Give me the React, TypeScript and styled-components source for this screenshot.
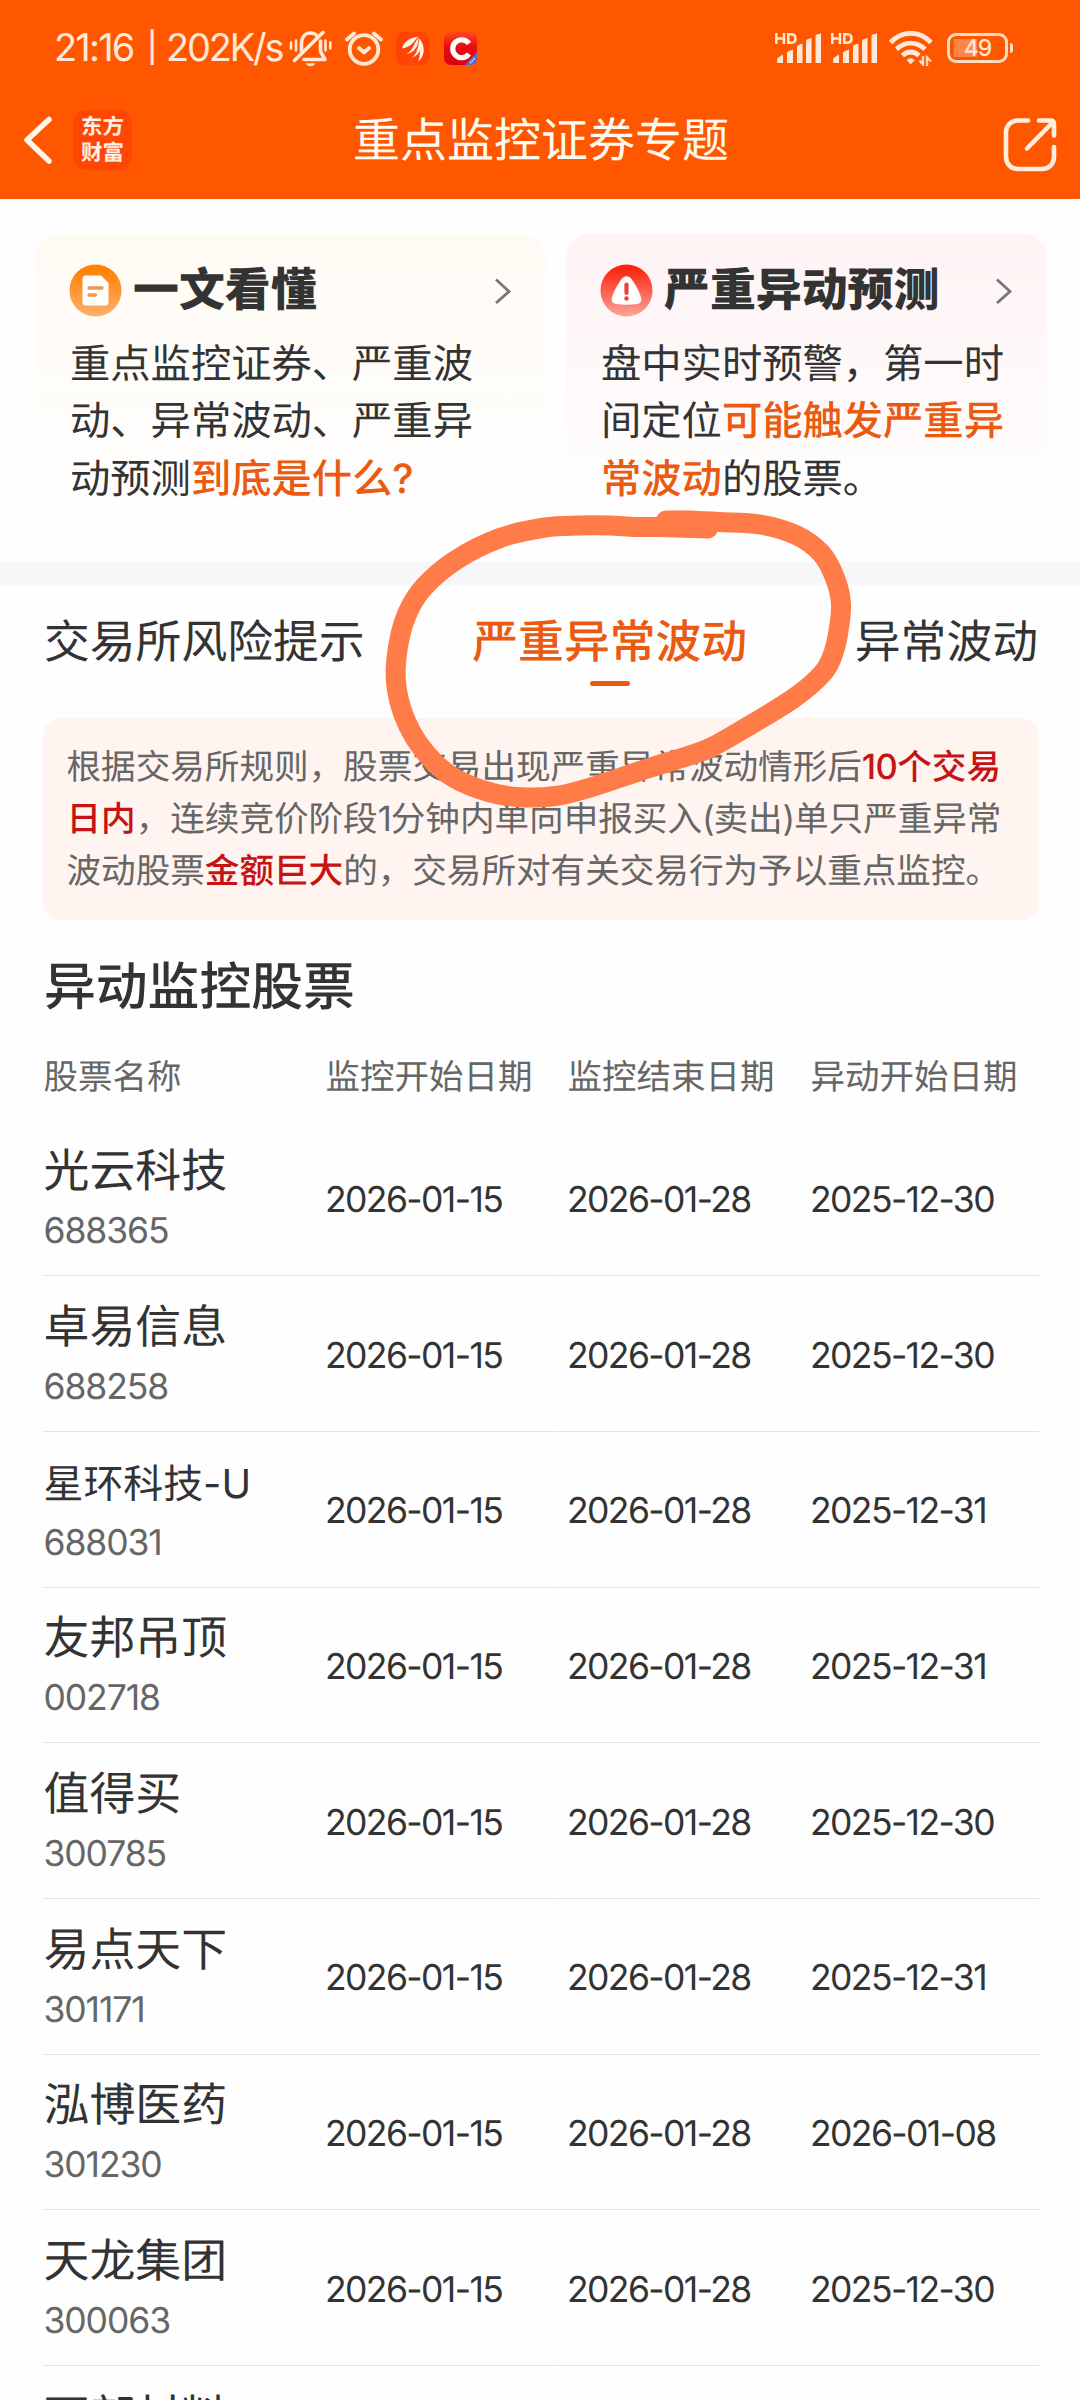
import React from 'react';
import styled, { createGlobalStyle } from 'styled-components';

const GlobalStyle = createGlobalStyle`
  *, *::before, *::after { box-sizing: border-box; }
  html, body { margin: 0; padding: 0; background: #fff; }
  body {
    width: 1080px;
    height: 2400px;
    overflow: hidden;
    color: #333;
    font-family: Inter, "Noto Sans CJK SC", sans-serif;
    text-rendering: geometricPrecision;
  }
`;

const Screen = styled.main`
  position: relative;
  display: flex;
  flex-direction: column;
  width: 1080px;
  height: 2400px;
  overflow: hidden;
  background: #fefefe;
`;

const TopBar = styled.header`
  display: flex;
  flex-direction: column;
  height: 199px;
  flex: none;
  background: #ff5600;
`;

const StatusBar = styled.div`
  display: flex;
  align-items: center;
  justify-content: space-between;
  height: 80px;
  padding: 16px 67px 0 54px;
  color: #ffe9d6;
`;

const StatusGroup = styled.div`
  display: flex;
  align-items: center;
  height: 64px;
`;

const StatusText = styled.span<{ $width: number; $spacing: number }>`
  width: ${(p) => p.$width}px;
  font-size: 38px;
  line-height: 60px;
  letter-spacing: ${(p) => p.$spacing}px;
  white-space: nowrap;
`;

const StatusDivider = styled.span`
  width: 21px;
  padding-left: 2px;
  font-size: 30px;
  font-weight: 500;
  line-height: 60px;
`;

const IconSlot = styled.span<{ $left: number }>`
  display: flex;
  margin-left: ${(p) => p.$left}px;
`;

const NavBar = styled.div`
  display: grid;
  grid-template-columns: 200px 1fr 200px;
  align-items: center;
  height: 119px;
`;

const NavLeft = styled.div`
  display: flex;
  align-items: center;
  gap: 20px;
  padding-left: 22px;
`;

const NavRight = styled.div`
  display: flex;
  justify-content: flex-end;
  padding: 10px 23px 0 0;
`;

const Brand = styled.div`
  width: 59px;
  height: 60px;
  padding-top: 3px;
  border-radius: 13px;
  background: #ff4703;
  color: #fff0e8;
  text-align: center;
  font: 700 21.5px/26px "Noto Sans CJK SC", sans-serif;
`;

const NavTitle = styled.h1`
  margin: 0;
  padding: 2px 0 0 2px;
  text-align: center;
  font-size: 47px;
  font-weight: 400;
  line-height: 70px;
  color: #fffaf2;
  white-space: nowrap;
`;

const Cards = styled.section`
  display: flex;
  gap: 20px;
  height: 363px;
  flex: none;
  padding: 35px 33px 0 35px;
`;

const Card = styled.article<{ $width: number; $tint: string }>`
  display: flex;
  flex-direction: column;
  width: ${(p) => p.$width}px;
  height: 310px;
  padding: 26px 34px 0 34px;
  border-radius: 24px;
  background: linear-gradient(180deg, ${(p) => p.$tint} 0%, #fefefe 92%);
`;

const CardHead = styled.div`
  display: flex;
  align-items: center;
  height: 60px;
`;

const CardTitle = styled.h2`
  flex: 1;
  margin: 0 0 0 11px;
  padding-top: 1px;
  font-size: 45.9px;
  font-weight: 900;
  line-height: 60px;
  white-space: nowrap;
`;

const CardText = styled.p`
  margin: 15px 0 0 1px;
  font-size: 40.3px;
  line-height: 57.3px;
  white-space: nowrap;
`;

const Accent = styled.span`
  color: #ea5a10;
  font-weight: 500;
`;

const Band = styled.div`
  height: 23px;
  flex: none;
  background: #f7f7fa;
`;

const Tabs = styled.nav`
  display: flex;
  justify-content: space-between;
  height: 133px;
  flex: none;
  padding: 28px 42px 0 44px;
`;

const Tab = styled.div<{ $active?: boolean }>`
  display: flex;
  flex-direction: column;
  align-items: center;
  gap: 8px;
  font-size: 45.8px;
  line-height: 60px;
  white-space: nowrap;
  color: ${(p) => (p.$active ? '#ea5a10' : '#333')};
  font-weight: ${(p) => (p.$active ? 500 : 400)};
`;

const TabMark = styled.i`
  width: 40px;
  height: 5px;
  border-radius: 3px;
  background: #ea5a10;
`;

const Notice = styled.p`
  height: 202px;
  flex: none;
  margin: 0 41px 0 43px;
  padding: 23px 0 0 23.500px;
  border-radius: 18px;
  background: #fff4ef;
  color: #666;
  font-size: 34.6px;
  line-height: 52px;
  white-space: nowrap;
`;

const Strong = styled.strong`
  color: #c41414;
  font-weight: 500;
`;

const Tight = styled.span<{ $by: number }>`
  letter-spacing: -${(p) => p.$by}px;
`;

const SectionTitle = styled.h2`
  margin: 32px 0 0 44px;
  height: 70px;
  flex: none;
  font-size: 51.800px;
  font-weight: 500;
  line-height: 70px;
`;

const TableHead = styled.div`
  display: grid;
  grid-template-columns: 282px 242px 243px 1fr;
  align-items: center;
  height: 99px;
  flex: none;
  margin: 0 41px 0 43.500px;
  padding-top: 4px;
  font-size: 34.500px;
  color: #666;
  white-space: nowrap;
`;

const Row = styled.div`
  display: grid;
  grid-template-columns: 282px 242px 243px 1fr;
  align-items: center;
  height: 155.7px;
  flex: none;
  margin: 0 41px 0 43px;
  background: linear-gradient(90deg, #e3e3e3 513px, #fefefe 513px 514px, #e3e3e3 514px)
    left bottom / 100% 1.4px no-repeat;
`;

const NameCell = styled.div`
  display: flex;
  flex-direction: column;
  padding: 4px 0 0 0.500px;
`;

const StockName = styled.span<{ $long: boolean }>`
  font-size: ${(p) => (p.$long ? 39.9 : 45.9)}px;
  line-height: 60px;
  white-space: nowrap;
`;

const StockCode = styled.span`
  font-size: 35.5px;
  line-height: 57px;
  letter-spacing: -1.1px;
  color: #666;
`;

const DateCell = styled.span`
  padding-top: 2px;
  font-size: 35.5px;
  line-height: 56px;
  letter-spacing: -1.6px;
  white-space: nowrap;
`;

const Markup = styled.svg`
  position: absolute;
  left: 0;
  top: 0;
  pointer-events: none;
`;

const MutedBell = () => (
  <svg width="43" height="37" viewBox="0 0 43 37" fill="none" stroke="#ffe9d6" strokeWidth="3.600" strokeLinecap="round">
    <path d="M12.5 22V14C12.5 7.500 16 3 21.500 3c3 0 5.200 1.200 6.800 3" />
    <path d="M31.500 11v10.500l4.500 8H15" strokeLinejoin="round" />
    <path d="M34 2.500 5.500 30.500" />
    <path d="M2 12.500v6M7 10.500v10M36.500 10.500v10M41.300 12.500v6" strokeWidth="2.600" />
    <path d="M16.500 33.200h10c-1.200 2-3 3-5 3s-3.800-1-5-3Z" fill="#ffe9d6" stroke="none" />
  </svg>
);

const AlarmClock = () => (
  <svg width="38" height="35" viewBox="0 0 38 35" fill="none" stroke="#ffe9d6" strokeWidth="3.800" strokeLinecap="round">
    <circle cx="19" cy="18.500" r="14.300" />
    <path d="m14 17 5 4.500 5-4.500" strokeLinejoin="round" />
    <path d="M2 8.500 9 2.500M36 8.500l-7-6" />
  </svg>
);

const WingApp = () => (
  <svg width="33" height="33" viewBox="0 0 33 33">
    <rect width="33" height="33" rx="7" fill="#ff4405" />
    <g fill="#fff3ea">
      <path d="M6 16.500C8 9 14 6 22 4.500 18 10 15 15 6 16.500Z" />
      <path d="M10 22c6-2 7-10 12.500-17C23.500 13 18 21.500 10 22Z" />
      <path d="M16 25.500c5-5 6-11 6.500-20C28 12 25 23 16 25.500Z" />
      <path d="M22.500 29.500C24 23 25 17 23.500 6.500 30 15 28.500 24 22.500 29.500Z" />
    </g>
    <path d="M10.500 21C17 18 17.500 11 22 5.500M16.500 25C22 20 22 13 23 6" fill="none" stroke="#ff4405" strokeWidth=".8" />
  </svg>
);

const CApp = () => (
  <svg width="33" height="33" viewBox="0 0 33 33">
    <defs>
      <clipPath id="cApp"><rect width="33" height="33" rx="7" /></clipPath>
      <linearGradient id="cRed" x1="0" y1="0" x2="0" y2="1">
        <stop offset="0" stopColor="#ff4a1c" />
        <stop offset=".45" stopColor="#ea0a10" />
        <stop offset="1" stopColor="#dc0010" />
      </linearGradient>
    </defs>
    <g clipPath="url(#cApp)">
      <rect width="33" height="33" fill="url(#cRed)" />
      <path d="M21 33 33 20v13Z" fill="#4c6fd4" />
      <path d="m26 31 5-5" stroke="#c5d3ff" strokeWidth="2" strokeDasharray="1.500 1" />
    </g>
    <path d="M25 11.500A9 9 0 1 0 25 22" fill="none" stroke="#fff" strokeWidth="5.200" />
  </svg>
);

const Signal = () => (
  <svg width="47" height="32" viewBox="0 0 47 32" fill="#ffe9d6">
    <g fill="none" stroke="#ffe9d6" strokeWidth="2.500">
      <path d="M1.300 1v11M9 1v11M1.300 6.500H9" />
      <path d="M13.300 2.200v8.600h2.500c3 0 4.700-1.700 4.700-4.300s-1.700-4.300-4.700-4.300Z" />
    </g>
    <path d="M2 27.500q0-1 1-1.700l5-3.300V31H3q-1 0-1-1ZM12 21q0-1 1-1.500l5-2V31h-6ZM22 14.500q0-1 1-1.500l4.500-1.500V31H22ZM31 9q0-1 1-1.500L36.500 6v25H31ZM40.500 4q0-1 1-1.500L46 1.500V31h-5.500Z" />
  </svg>
);

const Wifi = () => (
  <svg width="44" height="35" viewBox="0 0 44 35" fill="none" stroke="#ffe9d6" strokeWidth="4.800">
    <path d="M1.500 11.500C13-.7 30.500-.7 42 11.500" />
    <path d="M7.500 18.300c8.300-8.300 20.200-8.300 28.500 0" />
    <path d="M13.500 24.600c4.800-4.800 11.700-4.800 16.500 0" />
    <path d="M21.700 33.500 17.700 29q4-3.500 8 0Z" fill="#ffe9d6" stroke="none" />
    <path d="M30.500 29.500 34 33.500V25M38 35v-8.500l4 4" strokeWidth="2.400" stroke="#ffd9bd" />
  </svg>
);

const BatteryBox = styled.div`
  display: flex;
  align-items: center;
  gap: 2px;
  margin-left: 14px;

  &::after {
    content: '';
    width: 3px;
    height: 10px;
    border-radius: 0 3px 3px 0;
    background: #ffe9d6;
  }
`;

const BatteryBody = styled.div`
  display: flex;
  align-items: center;
  justify-content: center;
  width: 61px;
  height: 30px;
  border: 3px solid #ffdcc0;
  border-radius: 9px;
  background: linear-gradient(90deg, #ff8546 23px, transparent 23px) 4px 3px / 48px 18px no-repeat;
  font-size: 23px;
  font-weight: 500;
  line-height: 24px;
  letter-spacing: -1px;
`;

const BackIcon = () => (
  <svg width="31" height="50" viewBox="0 0 31 50" fill="none" stroke="#fff6ea" strokeWidth="5.500" strokeLinecap="round" strokeLinejoin="round">
    <path d="M27 4.500 5 25l22 21" />
  </svg>
);

const ShareIcon = () => (
  <svg width="54" height="55" viewBox="0 0 54 55" fill="none" stroke="#ffeedd" strokeWidth="4.600" strokeLinecap="round" strokeLinejoin="round">
    <path d="M25 3.500H15C8 3.500 3 8.500 3 15.500v24C3 47 8 52 15 52h24c7 0 12-5 12-12.500V30" />
    <path d="M36 3.500h11.500q3.500 0 3.500 3.500v11.500" />
    <path d="M24 31.500 49 6" />
  </svg>
);

const DocIcon = () => (
  <svg width="53" height="53" viewBox="0 0 53 53">
    <defs>
      <linearGradient id="doc" x1="0" y1="0" x2="0" y2="1">
        <stop offset=".1" stopColor="#ff8208" />
        <stop offset="1" stopColor="#ffb06a" />
      </linearGradient>
    </defs>
    <circle cx="26.500" cy="26.500" r="26" fill="url(#doc)" />
    <path d="M16.500 11.500H32L39.500 19v19q0 3.500-3.500 3.500H17q-3.500 0-3.500-3.500V15q0-3.500 3-3.500Z" fill="#fff" />
    <path d="M20 24h13M20 31h6.500" stroke="#f0984c" strokeWidth="3.400" strokeLinecap="round" />
  </svg>
);

const AlertIcon = () => (
  <svg width="53" height="53" viewBox="0 0 53 53">
    <defs>
      <linearGradient id="alert" x1="0" y1="0" x2="0" y2="1">
        <stop offset=".08" stopColor="#fb2410" />
        <stop offset="1" stopColor="#fda59a" />
      </linearGradient>
    </defs>
    <circle cx="26.500" cy="26.500" r="26" fill="url(#alert)" />
    <path d="M22 14.500q4.500-4.500 9 0Q37 22 41 33q1.500 6-4 7-10.500 1.500-21 0-5.500-1-4-7 4-11 10-18.500Z" fill="#fff" />
    <path d="M26.500 20.500v8.500" stroke="#e8443c" strokeWidth="4.200" strokeLinecap="round" />
    <circle cx="26.500" cy="34.500" r="2.200" fill="#e8443c" />
  </svg>
);

const ChevronIcon = () => (
  <svg width="18" height="28" viewBox="0 0 18 28" fill="none" stroke="#777" strokeWidth="2.800">
    <path d="M2 3.500 15 15.500 2 27" />
  </svg>
);

type Point = [number, number];

const loop: Point[] = [
  [666, 520.5], [690, 520.5], [719, 522], [760, 524.5], [796, 535], [821, 553], [835, 578], [841, 604],
  [838, 634], [832, 657], [822, 674], [794, 698], [747, 727], [712, 747], [691, 755], [643, 770],
  [592, 787], [556, 796], [517, 797], [482, 790], [448, 774], [421, 747], [404, 716], [396, 682],
  [398, 647], [407, 614], [424, 587], [456, 560], [500, 538], [545, 527.5], [580, 525.5], [609, 525.5],
  [635, 527], [660, 527], [708, 528.500],
];

// Catmull-Rom spline through the points, written out as cubic segments.
const smooth = (pts: Point[]) =>
  pts.slice(1).reduce((d, p, i) => {
    const a = pts[Math.max(i - 1, 0)];
    const b = pts[i];
    const c = pts[Math.min(i + 2, pts.length - 1)];
    return `${d}C${b[0] + (p[0] - a[0]) / 6} ${b[1] + (p[1] - a[1]) / 6} ${p[0] - (c[0] - b[0]) / 6} ${p[1] - (c[1] - b[1]) / 6} ${p[0]} ${p[1]}`;
  }, `M${pts[0][0]} ${pts[0][1]}`);

const stocks = [
  ['光云科技', '688365', '2025-12-30'],
  ['卓易信息', '688258', '2025-12-30'],
  ['星环科技-U', '688031', '2025-12-31'],
  ['友邦吊顶', '002718', '2025-12-31'],
  ['值得买', '300785', '2025-12-30'],
  ['易点天下', '301171', '2025-12-31'],
  ['泓博医药', '301230', '2026-01-08'],
  ['天龙集团', '300063', '2025-12-30'],
  ['西部材料', '', ''],
];

export default function App() {
  return (
    <Screen>
      <GlobalStyle />
      <TopBar>
        <StatusBar>
          <StatusGroup>
            <StatusText $width={91} $spacing={-1.8}>21:16</StatusText>
            <StatusDivider>|</StatusDivider>
            <StatusText $width={123} $spacing={-2.2}>202K/s</StatusText>
            <IconSlot $left={0}><MutedBell /></IconSlot>
            <IconSlot $left={13}><AlarmClock /></IconSlot>
            <IconSlot $left={13}><WingApp /></IconSlot>
            <IconSlot $left={15}><CApp /></IconSlot>
          </StatusGroup>
          <StatusGroup>
            <Signal />
            <IconSlot $left={9}><Signal /></IconSlot>
            <IconSlot $left={11}><Wifi /></IconSlot>
            <BatteryBox><BatteryBody>49</BatteryBody></BatteryBox>
          </StatusGroup>
        </StatusBar>
        <NavBar>
          <NavLeft>
            <BackIcon />
            <Brand>东方<br />财富</Brand>
          </NavLeft>
          <NavTitle>重点监控证券专题</NavTitle>
          <NavRight><ShareIcon /></NavRight>
        </NavBar>
      </TopBar>

      <Cards>
        <Card $width={511} $tint="#fffaf3">
          <CardHead>
            <DocIcon />
            <CardTitle>一文看懂</CardTitle>
            <ChevronIcon />
          </CardHead>
          <CardText>
            重点监控证券、严重波<br />
            动、异常波动、严重异<br />
            动预测<Accent>到底是什么?</Accent>
          </CardText>
        </Card>
        <Card $width={481} $tint="#fff3f4">
          <CardHead>
            <AlertIcon />
            <CardTitle>严重异动预测</CardTitle>
            <ChevronIcon />
          </CardHead>
          <CardText>
            盘中实时预警，第一时<br />
            间定位<Accent>可能触发严重异</Accent><br />
            <Accent>常波动</Accent>的股票。
          </CardText>
        </Card>
      </Cards>
      <Band />

      <Tabs>
        <Tab>交易所风险提示</Tab>
        <Tab $active>严重异常波动<TabMark /></Tab>
        <Tab>异常波动</Tab>
      </Tabs>

      <Notice>
        根据交易所规则，股票交易出现严重异常波动情形后<Strong><Tight $by={0.6}>10</Tight>个交易</Strong><br />
        <Strong>日内</Strong>，连续竞价阶段<Tight $by={1}>1</Tight>分钟内单向申报买入<Tight $by={1.2}>(</Tight>卖出<Tight $by={1.2}>)</Tight>单只严重异常<br />
        波动股票<Strong>金额巨大</Strong>的，交易所对有关交易行为予以重点监控。
      </Notice>

      <SectionTitle>异动监控股票</SectionTitle>
      <TableHead>
        <span>股票名称</span>
        <span>监控开始日期</span>
        <span>监控结束日期</span>
        <span>异动开始日期</span>
      </TableHead>
      {stocks.map(([name, code, date]) => (
        <Row key={name}>
          <NameCell>
            <StockName $long={name.length > 4}>{name}</StockName>
            <StockCode>{code || '\u00a0'}</StockCode>
          </NameCell>
          <DateCell>{date && '2026-01-15'}</DateCell>
          <DateCell>{date && '2026-01-28'}</DateCell>
          <DateCell>{date}</DateCell>
        </Row>
      ))}

      <Markup width="1080" height="900" viewBox="0 0 1080 900">
        <path d={smooth(loop)} fill="none" stroke="#ff7b47" strokeWidth="20" strokeLinecap="round" strokeLinejoin="round" />
      </Markup>
    </Screen>
  );
}
